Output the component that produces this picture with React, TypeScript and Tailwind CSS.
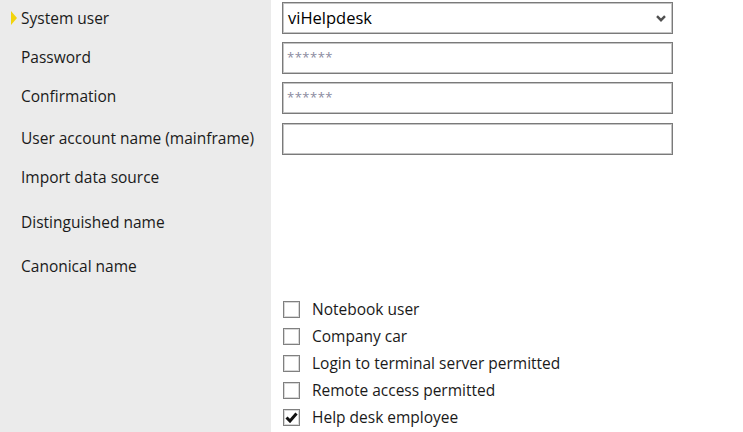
const labels = [
  { text: "System user", top: "mt-[8px]", current: true },
  { text: "Password", top: "mt-[19px]" },
  { text: "Confirmation", top: "mt-[19px]" },
  { text: "User account name (mainframe)", top: "mt-[22px]" },
  { text: "Import data source", top: "mt-[19px]" },
  { text: "Distinguished name", top: "mt-[25px]" },
  { text: "Canonical name", top: "mt-[24px]" },
];

const options = [
  { text: "Notebook user", checked: false },
  { text: "Company car", checked: false },
  { text: "Login to terminal server permitted", checked: false },
  { text: "Remote access permitted", checked: false },
  { text: "Help desk employee", checked: true },
];

function Box({ className = "", children }: { className?: string; children?: React.ReactNode }) {
  return (
    <div
      className={`h-[32px] w-[391px] border border-[#7a7a7a] bg-white shadow-[inset_0_0_0_1px_#c4c4c4] ${className}`}
    >
      {children}
    </div>
  );
}

function Masked() {
  return (
    <div className="pl-[4px] pt-[7px] text-[13px] leading-[14px] tracking-[0.5px] text-[#8a8a9e]">******</div>
  );
}

export default function App() {
  return (
    <div
      className="flex h-[432px] w-[743px] bg-white text-[15.5px] text-[#1a1a1a]"
      style={{ fontFamily: '"Open Sans", "Noto Sans", sans-serif' }}
    >
      {/* captions */}
      <div className="flex h-full w-[271px] shrink-0 flex-col bg-[#ebebeb]">
        {labels.map((l) => (
          <div key={l.text} className={`relative h-[20px] pl-[21px] leading-[20px] ${l.top}`}>
            {l.current && (
              <svg className="absolute left-[11px] top-[3px]" width="6" height="14" viewBox="0 0 6 14">
                <path d="M0 0 L6 7 L0 14 Z" fill="#f2d40c" />
              </svg>
            )}
            {l.text}
          </div>
        ))}
      </div>

      {/* values */}
      <div className="flex flex-col pl-[11px]">
        <Box className="mt-[2px] flex items-center justify-between pl-[5px] pr-[6px]">
          <span className="text-[16.5px] text-black">viHelpdesk</span>
          <svg width="10" height="7" viewBox="0 0 10 7">
            <path d="M1 1.2 L5 5.2 L9 1.2" fill="none" stroke="#505050" strokeWidth="2.4" />
          </svg>
        </Box>
        <Box className="mt-[8px]">
          <Masked />
        </Box>
        <Box className="mt-[8px]">
          <Masked />
        </Box>
        <Box className="mt-[9px]" />

        <div className="mt-[146px] flex flex-col gap-[10px] pl-[1px]">
          {options.map((o) => (
            <label key={o.text} className="flex h-[17px] items-center gap-[12px]">
              <span className="flex h-[17px] w-[17px] shrink-0 items-center justify-center border border-[#808080] bg-white shadow-[inset_0_0_0_1px_#d8d8d8]">
                {o.checked && (
                  <svg width="13" height="11" viewBox="0 0 13 11">
                    <path d="M1.5 5.5 L5 9 L11.5 1.5" fill="none" stroke="#111" strokeWidth="3" />
                  </svg>
                )}
              </span>
              <span className="whitespace-nowrap leading-[17px]">{o.text}</span>
            </label>
          ))}
        </div>
      </div>
    </div>
  );
}
